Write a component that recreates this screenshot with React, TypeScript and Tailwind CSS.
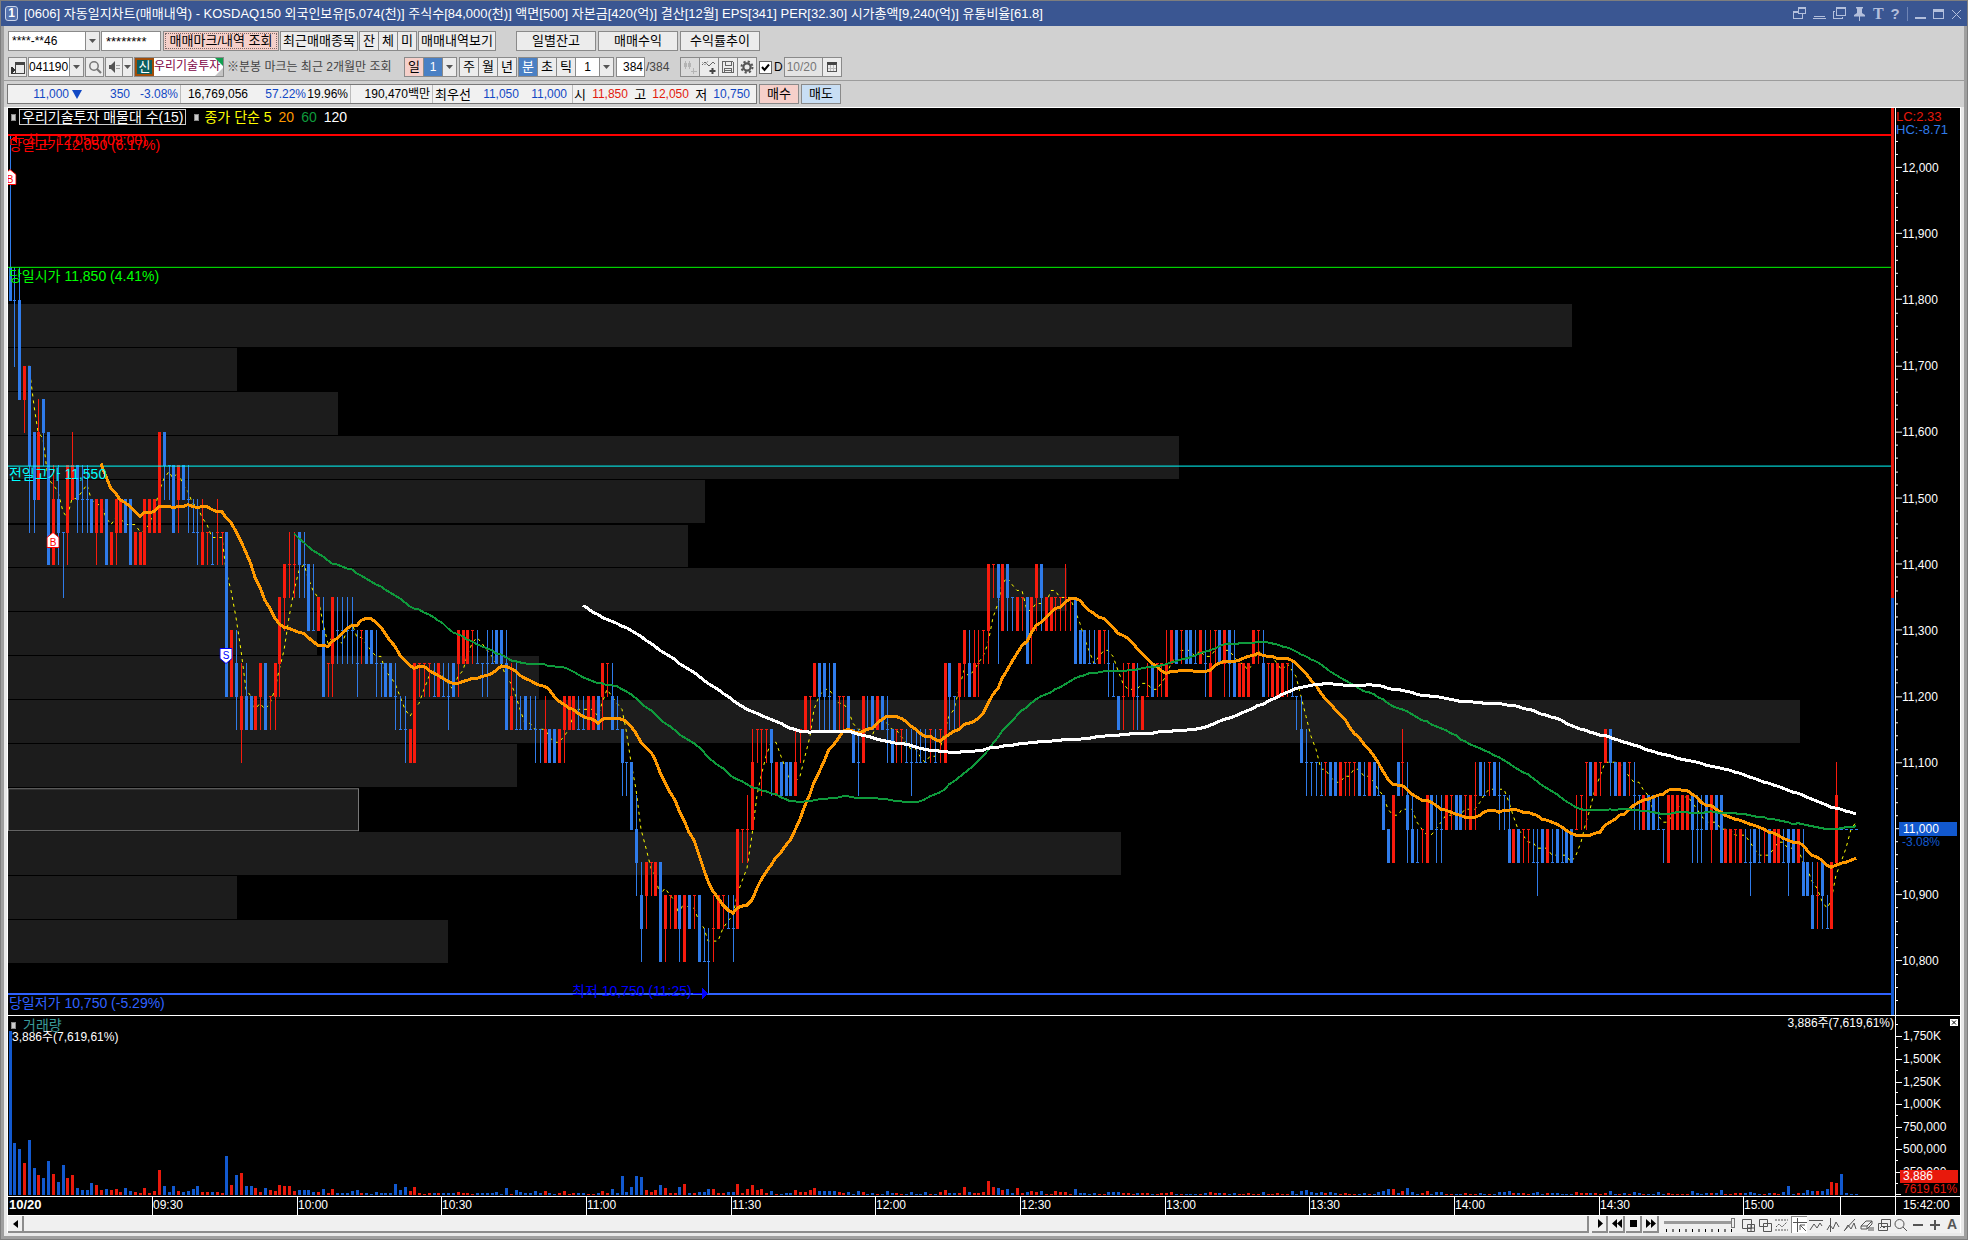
import { useState } from "react";
import type { ReactNode } from "react";

interface Candle {
  up: boolean;
  top: number;
  bottom: number;
  high: number;
  low: number;
  close: number;
}

// one token per minute: colour, body top, body bottom, high, low
// levels are base 36, one level is 50 won above 10,750
const RAW_CANDLES = `
bmlql bllmj blimi rjijh bjgje bhfhe rhfif bihig bhdhd rfdgd bfegd beeec rgegd rgfhf bgfge bffge bffge bfefe rfefd rfefe
bfdfd reded rfefd rfefe bfefe bfdfd reded reded rfdfd rfefe rfefe rhehe bhghf bgggf bgege rgfge bgfgf bffge beefe beefd
redfd reeed bdded reefd reeed be9e9 rb9b9 ba9b8 r98a7 b98a8 b9898 r9898 ra9a8 ba8a8 r9998 ra9a8 rcac9 rdcdb rddec rddec
bedec bddec bdbdb bbbdb rcbcb bb9c9 raaa9 rcac9 bbbca bbbca bbbca bbbca baab9 rbbba bbaba bbaba baab9 baaa9 ba9a9 ba9a9
b99a8 b8898 b8897 r8787 ra7a7 raaa9 raaa9 raaa9 b99a9 ra9a9 b99a9 b99a8 ba9a9 rbab9 rbaba rbaba rbbba baaba baaa9 baab9
baaba bbaba bbaba ba8b8 r98a8 b88a8 b8898 b9898 b8898 b8897 b8887 r8797 b8787 b8787 r8787 r9897 r9898 r9898 b8898 b8898
r9898 r9898 b9898 ra9a8 raaa9 b98a8 b8898 b8786 b7776 b7575 b5463 b3241 r4342 r4443 r4343 b4141 r3231 r3332 r3232 b3231
r3131 b3232 r3332 b3131 b1121 b1120 r2231 r3232 r3332 b2232 b2231 r5252 r5554 r5564 r7585 r8887 r8886 r8887 b8786 r7676
b7676 b7676 b7676 r7686 r8887 r9898 r9998 ra9a9 ba9a8 ba9a8 b99a8 ba8a8 r9998 r9998 b9898 b8787 b7786 r9797 b8898 b9898
r9898 b9898 b8897 b8787 r8887 r8887 b7787 b7786 b7787 b7787 b7787 r8887 b7787 r8887 ra7a7 ba9a8 b9998 ra9a8 rbab9 ba9b9
ra9b9 raab9 rbbba rdbda rdddc bdcda rdbdb bdcdb bcccb rcbcb rcccb bcaca rcbca rdcdb bdcdb rcbcb rcbcb rcccb rcccb rccdb
rcccb bcaca bbaba bbaba baaba baaba rbaba rbbba baab9 b99a9 b9898 r99a8 raaa9 ra9a8 b99a8 r9898 r99a9 ba9a9 raaa9 raaa9
ra9b9 rbaba bbaba rbbba bbaba bbaba baaba rbaba baab9 ra9b9 rbbba bbaba rbab9 bbab9 ba9b9 ra9a9 ra9a9 ra9a9 rbaba rbbba
ba9b9 raaa9 ra9a9 ra9a9 ra9a9 raaa9 b99a9 b9998 b8797 b7786 b7776 b7776 b6676 r7776 b7676 b7676 r7676 r7776 r7776 r7776
b7676 b6676 r7676 b7676 b6676 b6565 b5454 r6464 b7676 r7786 b6574 b5464 b4454 r5554 r6464 b6565 b5564 b5564 r6565 r6665
b6565 b6565 r6665 r6565 r6675 b7676 b6676 r7776 b7676 b6675 b6665 b5464 r5454 b5454 r5554 r5554 b4454 b4453 b5454 r5454
b4454 b5454 b4454 b5454 b5454 r5565 r6665 r7775 b7676 r7676 r7776 r8787 b8786 b7676 r7676 b7676 r7776 b6675 b6665 r6565
b6565 b6565 b5565 b5554 r6464 r6565 r6565 r6565 r6565 b6564 b5564 b5564 b6565 r6564 b6565 b6464 r5454 r5454 r5554 r5454
b4454 b4453 b5454 b4454 r5554 b5454 r5454 r5454 b4454 b5453 b5454 r5454 b4353 b4343 b3242 r3342 b4342 b2232 r4242 r6474
b5555 b5555 b5555 b5555`;

const VOLUMES = [
  164, 52, 46, 32, 55, 27, 20, 17, 34, 21, 13, 30, 17, 20, 7, 5, 5, 12, 10, 5,
  6, 5, 6, 3, 7, 4, 3, 2, 7, 2, 4, 25, 9, 3, 9, 4, 3, 4, 6, 9,
  3, 3, 3, 3, 2, 39, 10, 20, 22, 9, 9, 7, 3, 7, 5, 4, 10, 9, 9, 4,
  5, 5, 5, 3, 3, 6, 2, 6, 2, 2, 2, 4, 5, 2, 2, 1, 3, 2, 2, 2,
  11, 5, 8, 4, 8, 2, 1, 2, 2, 2, 2, 2, 2, 3, 2, 2, 1, 2, 2, 2,
  2, 3, 1, 7, 1, 5, 3, 2, 2, 4, 2, 4, 2, 1, 2, 4, 1, 2, 2, 2,
  1, 1, 2, 4, 2, 6, 2, 19, 3, 8, 19, 18, 5, 3, 5, 10, 7, 2, 2, 8,
  11, 2, 2, 3, 3, 6, 6, 2, 2, 3, 3, 11, 2, 6, 10, 5, 6, 2, 4, 1,
  1, 2, 2, 5, 3, 3, 5, 7, 4, 4, 4, 4, 3, 2, 3, 1, 4, 3, 1, 2,
  1, 1, 4, 2, 2, 1, 1, 3, 1, 1, 3, 1, 1, 3, 5, 2, 2, 2, 8, 3,
  2, 2, 3, 14, 8, 7, 5, 6, 2, 7, 2, 3, 4, 3, 4, 1, 1, 4, 3, 3,
  1, 6, 2, 2, 1, 2, 1, 1, 3, 3, 3, 2, 2, 1, 2, 2, 2, 1, 1, 2,
  2, 3, 1, 1, 1, 1, 1, 1, 2, 3, 2, 2, 2, 1, 2, 1, 1, 2, 1, 1,
  3, 1, 1, 2, 1, 1, 4, 1, 4, 5, 3, 2, 3, 2, 3, 2, 1, 2, 1, 1,
  1, 2, 1, 1, 3, 4, 6, 6, 2, 4, 7, 3, 1, 2, 4, 1, 3, 3, 1, 1,
  1, 1, 2, 1, 1, 2, 1, 1, 1, 3, 3, 4, 2, 2, 2, 1, 2, 3, 1, 2,
  2, 2, 1, 1, 1, 3, 2, 2, 2, 2, 1, 2, 4, 1, 1, 2, 1, 3, 2, 1,
  1, 1, 3, 1, 2, 1, 1, 1, 1, 4, 2, 1, 2, 2, 2, 5, 1, 1, 2, 2,
  2, 3, 2, 1, 1, 2, 2, 1, 3, 9, 1, 2, 2, 5, 4, 4, 4, 6, 13, 12,
  21, 2, 1, 1,
];

const PROFILE = [
  1564, 229, 330, 1171, 697, 680, 1059, 309, 531, 1792, 509, 350, 1113, 229, 440,
];

const W = 1883;
const H = 908;
const VH = 180;

const lv = (c: string) => parseInt(c, 36);

const candles: Candle[] = RAW_CANDLES.trim()
  .split(/\s+/)
  .map((t) => ({
    up: t[0] === "r",
    top: lv(t[1]),
    bottom: lv(t[2]),
    high: lv(t[3]),
    low: lv(t[4]),
    close: t[0] === "r" ? lv(t[1]) : lv(t[2]),
  }));

const cx = (i: number) => Math.floor(2 + 4.82 * i);
const cy = (level: number) => Math.round(887 - 33.1 * level);
const priceY = (price: number) => 887.5 - (33.1 * (price - 10750)) / 50;
const pct = (v: number, total: number) => `${(v / total) * 100}%`;

const average = (n: number) => {
  const points: string[] = [];
  for (let i = n - 1; i < candles.length; i++) {
    let sum = 0;
    for (let k = 0; k < n; k++) sum += candles[i - k].close;
    points.push(`${cx(i)},${Math.round(887 - (33.1 * sum) / n)}`);
  }
  return points.join(" ");
};

const TIMES = [
  { label: "09:30", x: 144 },
  { label: "10:00", x: 289 },
  { label: "10:30", x: 433 },
  { label: "11:00", x: 578 },
  { label: "11:30", x: 723 },
  { label: "12:00", x: 867 },
  { label: "12:30", x: 1012 },
  { label: "13:00", x: 1157 },
  { label: "13:30", x: 1301 },
  { label: "14:00", x: 1446 },
  { label: "14:30", x: 1591 },
  { label: "15:00", x: 1735 },
  { label: "", x: 1832 },
];

const PRICES = [
  12000, 11900, 11800, 11700, 11600, 11500, 11400, 11300, 11200, 11100, 10900, 10800,
];

const VOLUME_TICKS = [
  { label: "1,750K", y: 20 },
  { label: "1,500K", y: 43 },
  { label: "1,250K", y: 66 },
  { label: "1,000K", y: 88 },
  { label: "750,000", y: 111 },
  { label: "500,000", y: 133 },
  { label: "250,000", y: 156 },
];

const Arrow = () => (
  <span className="flex w-[14px] shrink-0 items-center justify-center border-l border-[#8a8a8a] bg-[#ececec]">
    <svg width="7" height="4" viewBox="0 0 7 4" fill="#555">
      <path d="M0 0h7L3.5 4z" />
    </svg>
  </span>
);

interface PickerProps {
  label: string;
  value: string;
  className: string;
  fieldClass?: string;
}

const Picker = ({ label, value, className, fieldClass = "bg-white px-[3px]" }: PickerProps) => (
  <div className={`flex h-5 border border-[#8a8a8a] ${className}`}>
    <select
      aria-label={label}
      className={`min-w-0 flex-1 appearance-none text-[12px] leading-[18px] outline-none ${fieldClass}`}
    >
      <option>{value}</option>
    </select>
    <Arrow />
  </div>
);

interface BtnProps {
  children: ReactNode;
  className: string;
  label?: string;
}

const Btn = ({ children, className, label }: BtnProps) => (
  <button
    aria-label={label}
    className={`flex h-5 shrink-0 items-center justify-center overflow-hidden whitespace-nowrap border border-[#8a8a8a] leading-[18px] ${className}`}
  >
    {children}
  </button>
);

const TitleBar = () => (
  <header className="flex h-[25px] items-center bg-[#3a5692] pl-[4px] pr-[5px] text-white">
    <span className="mr-[6px] flex h-[15px] w-[13px] items-center justify-center rounded-[3px] border border-[#cdd6ea] bg-[#5673ae] text-[12px] font-bold leading-[13px]">
      1
    </span>
    <h1 className="flex-1 truncate text-[13px] leading-[18px]">
      [0606] 자동일지차트(매매내역) - KOSDAQ150 외국인보유[5,074(천)] 주식수[84,000(천)]
      액면[500] 자본금[420(억)] 결산[12월] EPS[341] PER[32.30] 시가총액[9,240(억)]
      유통비율[61.8]
    </h1>
    <div className="flex items-center gap-[7px] text-[#b3bfdc]">
      <button aria-label="창 분리">
        <svg width="13" height="13" fill="none" stroke="currentColor" shapeRendering="crispEdges">
          <path d="M5 .5h7.500v6H5zM5 1.500h8M5.500 4.500h-5v7h9v-5M0 5.500h5" />
        </svg>
      </button>
      <button aria-label="내리기">
        <svg width="13" height="13" stroke="currentColor" shapeRendering="crispEdges">
          <path d="M1 9.500h11M0 11.500h13" />
        </svg>
      </button>
      <button aria-label="창 복사">
        <svg width="13" height="13" fill="none" stroke="currentColor" shapeRendering="crispEdges">
          <path d="M3.500 .5h9v8h-9zM3 1.500h10M2 4.500H.5v7h9V10" />
        </svg>
      </button>
      <button aria-label="고정">
        <svg width="13" height="14" fill="currentColor">
          <path d="M3 0h7v1L9 2v4l3 2v1.500H7V14H6V9.500H1V8l3-2V2L3 1z" />
        </svg>
      </button>
      <button
        aria-label="글꼴"
        className="font-['Liberation_Serif',serif] w-[10px] text-[16px] font-bold leading-[16px]"
      >
        T
      </button>
      <button aria-label="도움말" className="w-[10px] text-[15px] font-bold leading-[16px]">
        ?
      </button>
      <span className="h-[14px] w-px bg-[#6f85b5]" />
      <button aria-label="최소화">
        <svg width="11" height="12" fill="currentColor">
          <path d="M0 9h11v2H0z" />
        </svg>
      </button>
      <button aria-label="최대화">
        <svg width="11" height="12" fill="none" stroke="currentColor" shapeRendering="crispEdges">
          <path d="M.5 1.500h9.500v9H.5zM0 2.500h10M0 3.500h10" />
        </svg>
      </button>
      <button aria-label="닫기">
        <svg width="11" height="12" fill="none" stroke="currentColor">
          <path d="M1 2l9 9M10 2l-9 9" />
        </svg>
      </button>
    </div>
  </header>
);

const AccountRow = () => (
  <div className="flex gap-px">
    <Picker label="계좌" value="****-**46" className="w-[92px]" />
    <input
      aria-label="비밀번호"
      defaultValue="********"
      className="h-5 w-[60px] border border-[#8a8a8a] bg-white px-[4px] text-[13px] outline-none"
    />
    <Btn className="ml-px w-[116px] bg-[#f6d0ca] p-px">
      <span className="flex h-full w-full items-center justify-center border border-dotted border-[#7a6a68]">
        매매마크/내역 조회
      </span>
    </Btn>
    <Btn className="w-[78px] bg-[#ececec]">최근매매종목</Btn>
    <div className="flex">
      <Btn className="w-5 bg-[#ececec]">잔</Btn>
      <Btn className="-ml-px w-5 bg-[#ececec]">체</Btn>
      <Btn className="-ml-px w-5 bg-[#ececec]">미</Btn>
    </div>
    <Btn className="w-[78px] bg-[#ececec]">매매내역보기</Btn>
    <div className="ml-[19px] flex gap-[2px]">
      <Btn className="w-20 bg-[#ececec]">일별잔고</Btn>
      <Btn className="w-20 bg-[#ececec]">매매수익</Btn>
      <Btn className="w-20 bg-[#ececec]">수익률추이</Btn>
    </div>
  </div>
);

const ChartRow = () => {
  const [daily, setDaily] = useState(true);
  return (
    <div className="flex gap-px">
      <Btn label="종목창" className="w-[19px] bg-[#ececec]">
        <svg width="14" height="13" fill="none" stroke="#444" shapeRendering="crispEdges">
          <path d="M4.500 1.500h9v11h-9zM4 3.500h10M4 2.500h10" />
          <path d="M0 5.500v7h4M1 6v6M2 7v4M3 8v2" stroke="#333" />
        </svg>
      </Btn>
      <Picker label="종목코드" value="041190" className="w-[56px]" fieldClass="bg-white" />
      <Btn label="검색" className="w-[19px] bg-[#ececec]">
        <svg width="14" height="14" fill="none" stroke="#777" strokeWidth="1.500">
          <circle cx="6" cy="6" r="4.200" />
          <path d="M9 9l4 4" strokeWidth="2.200" />
        </svg>
      </Btn>
      <div className="flex">
        <Btn label="소리" className="w-[18px] bg-[#ececec]">
          <svg width="13" height="12">
            <path d="M1 4h2l4-4v12L3 8H1z" fill="#555" />
            <path d="M9 4v1M9 7v1M11 4v1M11 7v1" stroke="#555" />
          </svg>
        </Btn>
        <Btn label="소리 설정" className="-ml-px w-[11px] bg-[#ececec]">
          <svg width="7" height="4" viewBox="0 0 7 4" fill="#555">
            <path d="M0 0h7L3.500 4z" />
          </svg>
        </Btn>
      </div>
      <div className="flex h-5 w-[90px] border border-[#8a8a8a] bg-white">
        <span className="w-[19px] shrink-0 border-2 border-[#a04c08] bg-[#0c5f5f] text-center leading-[14px] text-white">
          신
        </span>
        <span className="relative flex-1 overflow-hidden whitespace-nowrap text-[12px] leading-[17px] text-[#7d0044]">
          우리기술투자
          <svg className="absolute right-0 top-0" width="8" height="18">
            <path d="M0 0h8v8z" fill="#12a050" />
            <path d="M8 10v8H0z" fill="#c4c4c4" />
          </svg>
        </span>
      </div>
      <span className="w-[178px] shrink-0 whitespace-nowrap pl-[2px] text-[12px] leading-5 text-[#444]">
        ※분봉 마크는 최근 2개월만 조회
      </span>
      <div className="flex">
        <Btn className="w-5 bg-[#f6d0ca]">일</Btn>
        <Picker label="일 단위" value="1" className="-ml-px w-[34px]" fieldClass="bg-[#4a80c4] text-white text-center" />
      </div>
      <div className="ml-px flex">
        <Btn className="w-5 bg-[#ececec]">주</Btn>
        <Btn className="-ml-px w-5 bg-[#ececec]">월</Btn>
        <Btn className="-ml-px w-5 bg-[#ececec]">년</Btn>
      </div>
      <div className="flex">
        <Btn className="w-5 bg-[#4a80c4] text-white">분</Btn>
        <Btn className="-ml-px w-5 bg-[#ececec]">초</Btn>
        <Btn className="-ml-px w-5 bg-[#ececec]">틱</Btn>
        <Picker label="분 단위" value="1" className="-ml-px w-[39px]" fieldClass="bg-white text-center" />
      </div>
      <input
        aria-label="조회 개수"
        defaultValue="384"
        className="ml-px h-5 w-[29px] border border-[#8a8a8a] bg-white px-px text-right text-[12px] outline-none"
      />
      <span className="w-[33px] text-[12px] leading-5 text-[#444]">/384</span>
      <div className="flex">
        <Btn label="봉 추가" className="w-5 bg-[#dadada]">
          <svg width="14" height="14" stroke="#b4b4b4" shapeRendering="crispEdges">
            <path d="M2.500 1v8M6.500 1v8M10.500 8v6M8 11.500h6" />
            <path d="M1 3h3v4H1zM5 3h3v4H5z" fill="#b4b4b4" stroke="none" />
          </svg>
        </Btn>
        <Btn label="지표 추가" className="-ml-px w-5 bg-[#ececec]">
          <svg width="14" height="14" fill="none" stroke="#666">
            <path d="M0 5l3-3 4 4 4-4 2 2" />
            <path d="M0 2l3 3 3-4" stroke="#aaa" />
            <path d="M10.500 8v6M7.500 11h6" strokeWidth="2" stroke="#444" />
          </svg>
        </Btn>
        <Btn label="저장" className="-ml-px w-5 bg-[#ececec]">
          <svg width="14" height="14" fill="none" stroke="#666" shapeRendering="crispEdges">
            <path d="M1.500 1.500h10l1 1v10h-11zM4.500 1v4h6V1M3.500 13V8.500h7V13M4 10.500h6" />
          </svg>
        </Btn>
        <Btn label="설정" className="-ml-px w-5 bg-[#ececec]">
          <svg width="14" height="14" fill="none" stroke="#555">
            <circle cx="7" cy="7" r="3.600" strokeWidth="2.200" />
            <circle cx="7" cy="7" r="5.500" strokeWidth="2" strokeDasharray="2.200 2.120" />
          </svg>
        </Btn>
      </div>
      <label className="ml-px flex items-center gap-[2px]">
        <span className="relative flex h-[13px] w-[13px]">
          <input
            type="checkbox"
            checked={daily}
            onChange={(e) => setDaily(e.target.checked)}
            className="h-[13px] w-[13px] appearance-none border border-[#666] bg-white"
          />
          {daily && (
            <svg className="pointer-events-none absolute left-[2px] top-[2px]" width="9" height="9" fill="none" stroke="#000" strokeWidth="2">
              <path d="M1 4l2.500 3L8 1.500" />
            </svg>
          )}
        </span>
        <span className="text-[12px]">D</span>
      </label>
      <div className="flex">
        <input
          aria-label="날짜"
          defaultValue="10/20"
          className="h-5 w-[39px] border border-[#8a8a8a] bg-[#e4e4e4] px-[2px] text-[12px] text-[#777] outline-none"
        />
        <Btn label="달력" className="-ml-px w-5 bg-[#ececec]">
          <svg width="12" height="12" fill="none" shapeRendering="crispEdges">
            <path d="M1 1h10v3H1z" fill="#444" />
            <path d="M1.500 3v7.500h9V3" stroke="#555" />
            <path d="M2 7.500h8M4.500 4v6M7.500 4v6" stroke="#bbb" />
          </svg>
        </Btn>
      </div>
    </div>
  );
};

const QuoteRow = () => (
  <div className="flex gap-[2px] whitespace-nowrap text-[12px]">
    <dl className="flex h-5 w-[750px] border border-[#777] bg-[#f1f1f1] leading-[19px] text-[#1148c4]">
      <div className="flex w-[173px] justify-end border-r border-[#bbb] pr-[2px]">
        <dd className="flex items-center gap-[3px]">
          11,000
          <svg width="10" height="9" fill="#1148c4">
            <path d="M0 0h10L5 9z" />
          </svg>
        </dd>
        <dd className="w-12 text-right">350</dd>
        <dd className="w-12 text-right">-3.08%</dd>
      </div>
      <div className="flex w-[170px] justify-end border-r border-[#bbb] pr-[2px] text-black">
        <dd>16,769,056</dd>
        <dd className="w-[58px] text-right text-[#1148c4]">57.22%</dd>
        <dd className="w-[42px] text-right">19.96%</dd>
      </div>
      <div className="w-[82px] border-r border-[#bbb] pr-[2px] text-right text-black">
        <dd>190,470백만</dd>
      </div>
      <div className="flex w-[140px] justify-between border-r border-[#bbb] pl-[2px] pr-[5px]">
        <dt className="text-[13px] text-black">최우선</dt>
        <dd>11,050</dd>
        <dd>11,000</dd>
      </div>
      <div className="flex flex-1 justify-between pl-px pr-[6px]">
        <dt className="text-[13px] text-black">시</dt>
        <dd className="text-[#e21a0c]">11,850</dd>
        <dt className="text-[13px] text-black">고</dt>
        <dd className="text-[#e21a0c]">12,050</dd>
        <dt className="text-[13px] text-black">저</dt>
        <dd>10,750</dd>
      </div>
    </dl>
    <Btn className="w-10 bg-[#f6d0ca] text-[13px]">매수</Btn>
    <Btn className="w-10 bg-[#c8def4] text-[13px]">매도</Btn>
  </div>
);

const PriceCanvas = () => (
  <svg
    className="absolute inset-0 h-full w-full"
    viewBox={`0 0 ${W} ${H}`}
    preserveAspectRatio="none"
    shapeRendering="crispEdges"
  >
    {PROFILE.map((w, i) => (
      <rect
        key={i}
        x={i === 11 ? 0.5 : 0}
        y={Math.round(196 + 44.1 * i) + (i === 11 ? 0.5 : 0)}
        width={w}
        height={i === 11 ? 42 : 43}
        fill="#1c1c1c"
        stroke={i === 11 ? "#777" : "none"}
      />
    ))}
    <polyline points={average(5)} fill="none" stroke="#ff0" strokeDasharray="3 4" />
    {candles.map((c, i) => (
      <g key={i} fill={c.up ? "#f81b0d" : "#2f7bea"}>
        <rect x={cx(i)} y={cy(c.high)} width="1" height={cy(c.low) - cy(c.high) + 1} />
        <rect x={cx(i) - 1} y={cy(c.top)} width="3" height={cy(c.bottom) - cy(c.top) + 1} />
      </g>
    ))}
    <path d="M0 358.500H1883" stroke="#0ff" />
    <path d="M0 159.500H1883" stroke="#0f0" />
    <path d="M0 27H1883" stroke="#f00" strokeWidth="2" />
    <g fill="none">
      <polyline points={average(20)} stroke="#f90" strokeWidth="3" />
      <polyline points={average(60)} stroke="#0f9a3c" strokeWidth="2" />
      <polyline points={average(120)} stroke="#fff" strokeWidth="3" />
    </g>
    <path d="M0 887H1883" stroke="#2f62ff" strokeWidth="2" />
    <path d="M685 886.500h10" stroke="#00f" />
    <path d="M694 881l6 5.500-6 5.500z" fill="#00f" />
    <path d="M3 31l6-4v8zM9 30.500h7v1H9z" fill="#f00" />
  </svg>
);

const Marker = ({ kind, x, y }: { kind: "B" | "S"; x: number; y: number }) => (
  <span
    className="absolute flex -translate-x-1/2 -translate-y-1/2"
    style={{ left: pct(x, W), top: pct(y, H) }}
  >
    <svg width="13" height="16" fill="#fff" stroke={kind === "B" ? "#f00" : "#00f"}>
      <path d={kind === "B" ? "M.5 15.500v-10l6-5 6 5v10z" : "M.5 .5v10l6 5 6-5V.5z"} />
      <text
        x="6.500"
        y={kind === "B" ? 14 : 11}
        textAnchor="middle"
        fontSize="10"
        stroke="none"
        fill={kind === "B" ? "#f00" : "#00f"}
      >
        {kind}
      </text>
    </svg>
  </span>
);

interface LineLabelProps {
  y: number;
  x?: number;
  className: string;
  children: ReactNode;
}

const LineLabel = ({ y, x = 1, className, children }: LineLabelProps) => (
  <span
    className={`absolute text-[14px] leading-[14px] ${className}`}
    style={{ top: pct(y, H), left: pct(x, W) }}
  >
    {children}
  </span>
);

const PricePanel = () => (
  <section className="flex min-h-0 flex-1">
    <div className="relative min-w-0 flex-1 overflow-hidden whitespace-nowrap">
      <PriceCanvas />
      <div className="relative flex items-center gap-[3px] pl-[3px] pt-px text-[14px] leading-[14px]">
        <span className="h-[7px] w-[5px] border border-[#888] bg-[#ccc]" />
        <span className="border border-[#ccc] px-[2px] text-white">우리기술투자 매물대 수(15)</span>
        <span className="ml-[5px] h-[7px] w-[5px] border border-[#888] bg-[#ccc]" />
        <span className="ml-[2px] flex gap-[7px]">
          <span className="text-[#ff0]">종가 단순 5</span>
          <span className="text-[#f90]">20</span>
          <span className="text-[#0f9a3c]">60</span>
          <span className="text-white">120</span>
        </span>
      </div>
      <LineLabel y={25} x={18} className="text-[#f00]">최고 12,050 (09:00)</LineLabel>
      <LineLabel y={30} className="text-[#f00]">당일고가 12,050 (6.17%)</LineLabel>
      <LineLabel y={161} className="text-[#0f0]">당일시가 11,850 (4.41%)</LineLabel>
      <LineLabel y={359} className="text-[#0ff]">전일고가 11,550</LineLabel>
      <LineLabel y={889} className="text-[#2f62ff]">당일저가 10,750 (-5.29%)</LineLabel>
      <LineLabel y={877} x={564} className="text-[#00f]">최저 10,750 (11:25)</LineLabel>
      <Marker kind="B" x={2} y={69} />
      <Marker kind="B" x={45} y={432} />
      <Marker kind="S" x={218} y={549} />
    </div>
    <div className="mr-px flex w-[3px] flex-col">
      <span className="bg-[#e8190c]" style={{ height: pct(priceY(11350), H) }} />
      <span className="flex-1 bg-[#1259cf]" />
    </div>
    <div className="relative w-[65px] text-[12px] leading-[14px] text-white">
      <svg
        className="absolute inset-0 h-full w-full"
        viewBox={`0 0 65 ${H}`}
        preserveAspectRatio="none"
        shapeRendering="crispEdges"
      >
        <path d={`M.5 0V${H}`} stroke="#fff" />
        {Array.from({ length: 66 }, (_, i) => {
          const y = Math.round(priceY(12040 - i * 20)) - 0.5;
          return <path key={i} d={`M1 ${y}h${i % 5 === 2 ? 6 : 2}`} stroke="#fff" />;
        })}
      </svg>
      <p className="relative pl-px pt-[2px] text-[13px] leading-[13px] text-[#e8190c]">LC:2.33</p>
      <p className="relative pl-px text-[13px] leading-[13px] text-[#2f7bea]">HC:-8.71</p>
      {PRICES.map((p) => (
        <span
          key={p}
          className="absolute left-[7px] -translate-y-1/2"
          style={{ top: pct(priceY(p), H) }}
        >
          {p.toLocaleString("en-US")}
        </span>
      ))}
      <span
        className="absolute left-[4px] right-[3px] -translate-y-1/2 bg-[#1259cf] pl-[4px]"
        style={{ top: pct(priceY(11000), H) }}
      >
        11,000
      </span>
      <span
        className="absolute left-[7px] text-[#1259cf]"
        style={{ top: pct(priceY(11000) + 6, H) }}
      >
        -3.08%
      </span>
    </div>
  </section>
);

const VolumePanel = () => (
  <section className="flex h-[181px] border-t border-white text-[12px] leading-[14px] text-white">
    <div className="relative min-w-0 flex-1 whitespace-nowrap">
      <svg
        className="absolute inset-0 h-full w-full"
        viewBox={`0 0 ${W} ${VH}`}
        preserveAspectRatio="none"
        shapeRendering="crispEdges"
      >
        {VOLUMES.map((v, i) => (
          <rect
            key={i}
            x={cx(i) - 1}
            y={VH - 1 - v}
            width="3"
            height={v}
            fill={candles[i].up ? "#e8190c" : "#1259cf"}
          />
        ))}
      </svg>
      <div className="relative flex items-center gap-[7px] pl-[3px] pt-[2px]">
        <span className="h-[7px] w-[5px] border border-[#888] bg-[#ccc]" />
        <span className="text-[14px] leading-[14px] text-[#3a9a9a]">거래량</span>
      </div>
      <p className="relative -mt-[2px] pl-[4px]">3,886주(7,619,61%)</p>
      <p className="absolute -right-[3px] top-0">3,886주(7,619,61%)</p>
    </div>
    <div className="relative ml-[4px] w-[65px] overflow-hidden border-l border-white">
      <svg className="absolute inset-0" width="8" height="180" stroke="#fff" shapeRendering="crispEdges">
        {VOLUME_TICKS.map((t) => (
          <path key={t.y} d={`M0 ${t.y + 0.5}h6M0 ${t.y - 11.5}h2`} />
        ))}
        <path d="M0 167.500h2M0 178.500h5" />
      </svg>
      {VOLUME_TICKS.map((t) => (
        <span key={t.y} className="absolute left-[7px] -translate-y-1/2" style={{ top: t.y }}>
          {t.label}
        </span>
      ))}
      <button
        aria-label="거래량 닫기"
        className="absolute right-[2px] top-[3px] flex h-[7px] w-[8px] items-center justify-center bg-white"
      >
        <svg width="6" height="5" stroke="#000">
          <path d="M1 .5l4 4M5 .5l-4 4" />
        </svg>
      </button>
      <span className="absolute bottom-[13px] left-[4px] right-[2px] bg-[#e8190c] pl-[3px] leading-[13px]">
        3,886
      </span>
      <span className="absolute bottom-0 left-[7px] leading-[13px] text-[#e8190c]">7619,61%</span>
    </div>
  </section>
);

const TimeAxis = () => (
  <section className="flex h-[19px] border-t border-white text-[12px] leading-[16px] text-white">
    <div className="relative min-w-0 flex-1">
      <span className="pl-px text-[13px] font-bold">10/20</span>
      {TIMES.map((t) => (
        <span
          key={t.x}
          className="absolute inset-y-0 border-l border-white"
          style={{ left: pct(t.x, W) }}
        >
          {t.label}
        </span>
      ))}
    </div>
    <div className="ml-[4px] w-[65px] border-l border-white pl-[7px]">15:42:00</div>
  </section>
);

const PLAY_ICONS = [
  { label: "재생", d: "M5 2v9l5-4.500z" },
  { label: "뒤로", d: "M7 2v9L2 6.500zM12 2v9L7 6.500z" },
  { label: "정지", d: "M3 3h7v7H3z" },
  { label: "앞으로", d: "M2 2v9l5-4.500zM7 2v9l5-4.500z" },
];

const TOOL_ICONS = [
  { label: "창 추가", d: "M1.500 1.500h9v9h-9zM6.500 6.500h7v7h-7zM10 7v6M7 10h6" },
  { label: "창 겹치기", d: "M1.500 1.500h8v7h-8zM5.500 5.500h8v8h-8z" },
  { label: "구간", d: "M0 2h13M0 12h13M1 9l3-3 3 3 5-5", dash: true },
  { label: "십자선", d: "M0 4.500h14M4.500 0v14M7 7l6 6M7 12V7h5", active: true },
  { label: "추세선", d: "M0 2.500h14M1 12l4-6 3 4 3-5 2 3" },
  { label: "수직선", d: "M4.500 0v14M1 12l3-5 3 4 3-7 3 5" },
  { label: "사선", d: "M1 13L12 1M2 12l3-5 3 4 3-6 2 6" },
  { label: "모두 지우기", d: "M1 8l5-5h6v3l-5 5H1zM1 8h6l5-5M7 8v3M9 9v4M11 9v4M13 9v4" },
  { label: "차트 복사", d: "M4.500 1.500h9v7h-9zM1.500 5.500h9v7h-9zM3 10l2-2 2 2 2-2" },
  { label: "확대경", d: "M10 6a4.500 4.500 0 1 1-9 0 4.500 4.500 0 0 1 9 0zM9 9l4 4" },
];

const BottomBar = () => (
  <footer className="flex h-[18px] items-stretch border-t border-white bg-[#f0f0f0]">
    <button
      aria-label="왼쪽"
      className="flex w-[16px] items-center justify-center border-b-2 border-r-2 border-[#8c8c8c] bg-[#f0f0f0]"
    >
      <svg width="5" height="8">
        <path d="M5 0v8L0 4z" />
      </svg>
    </button>
    <div className="mr-[3px] flex-1 border-b-2 border-r-2 border-[#8c8c8c] bg-[#f0f0f0]" />
    <div className="flex gap-px">
      {PLAY_ICONS.map((icon) => (
        <button
          key={icon.label}
          aria-label={icon.label}
          className="flex w-[16px] items-center justify-center border-b-2 border-r-2 border-[#8c8c8c]"
        >
          <svg width="13" height="13">
            <path d={icon.d} />
          </svg>
        </button>
      ))}
    </div>
    <div className="ml-[5px] mr-[5px] w-[71px]">
      <input
        type="range"
        aria-label="재생 속도"
        defaultValue="100"
        className="block h-[12px] w-full appearance-none bg-transparent [&::-webkit-slider-runnable-track]:h-[3px] [&::-webkit-slider-runnable-track]:bg-[#9a9a9a] [&::-webkit-slider-thumb]:-mt-[3px] [&::-webkit-slider-thumb]:h-[10px] [&::-webkit-slider-thumb]:w-[4px] [&::-webkit-slider-thumb]:appearance-none [&::-webkit-slider-thumb]:border [&::-webkit-slider-thumb]:border-[#777] [&::-webkit-slider-thumb]:bg-[#eee]"
      />
      <svg width="71" height="4" className="block">
        {Array.from({ length: 11 }, (_, i) => (
          <rect key={i} x={2 + i * 6.5} y="1" width="1" height="3" />
        ))}
      </svg>
    </div>
    <div className="flex items-center gap-px text-[#555]">
      {TOOL_ICONS.map((icon) => (
        <button
          key={icon.label}
          aria-label={icon.label}
          className={`flex h-[17px] w-[16px] items-center justify-center ${
            icon.active ? "border-l border-t border-[#888] bg-white" : ""
          }`}
        >
          <svg width="14" height="14" fill="none" stroke="currentColor">
            <path d={icon.d} strokeDasharray={icon.dash ? "2 1" : undefined} />
          </svg>
        </button>
      ))}
      <button aria-label="축소" className="flex h-[17px] w-[16px] items-center justify-center">
        <svg width="10" height="10" fill="currentColor">
          <path d="M0 4h10v2H0z" />
        </svg>
      </button>
      <button aria-label="확대" className="flex h-[17px] w-[16px] items-center justify-center">
        <svg width="10" height="10" fill="currentColor">
          <path d="M0 4h4V0h2v4h4v2H6v4H4V6H0z" />
        </svg>
      </button>
      <button aria-label="글자 크기" className="flex h-[17px] w-[16px] items-center justify-center text-[14px] font-bold">
        A
      </button>
    </div>
  </footer>
);

const App = () => {
  return (
    <main className="flex h-screen min-h-[600px] flex-col border border-[#7e7e7e] bg-[#d1d1d1] font-['Liberation_Sans','Noto_Sans_CJK_KR',sans-serif] text-[13px] text-black">
      <TitleBar />
      <div className="flex min-h-0 flex-1 flex-col border-x-[3px] border-b-[3px] border-[#9f9f9f]">
        <div className="flex flex-col gap-[6px] overflow-hidden border-b border-[#9c9c9c] pb-[3px] pl-[4px] pt-[5px]">
          <AccountRow />
          <ChartRow />
        </div>
        <div className="overflow-hidden py-[3px] pl-[3px]">
          <QuoteRow />
        </div>
        {/* chart area */}
        <div className="flex min-h-0 flex-1 flex-col bg-[#e9e9e9] px-[3px] pb-[3px]">
          <div className="flex min-h-0 flex-1 flex-col border-x border-t border-white">
            <div className="flex min-h-0 flex-1 flex-col bg-black">
              <PricePanel />
              <VolumePanel />
              <TimeAxis />
            </div>
            <BottomBar />
          </div>
        </div>
      </div>
    </main>
  );
};

export default App;
